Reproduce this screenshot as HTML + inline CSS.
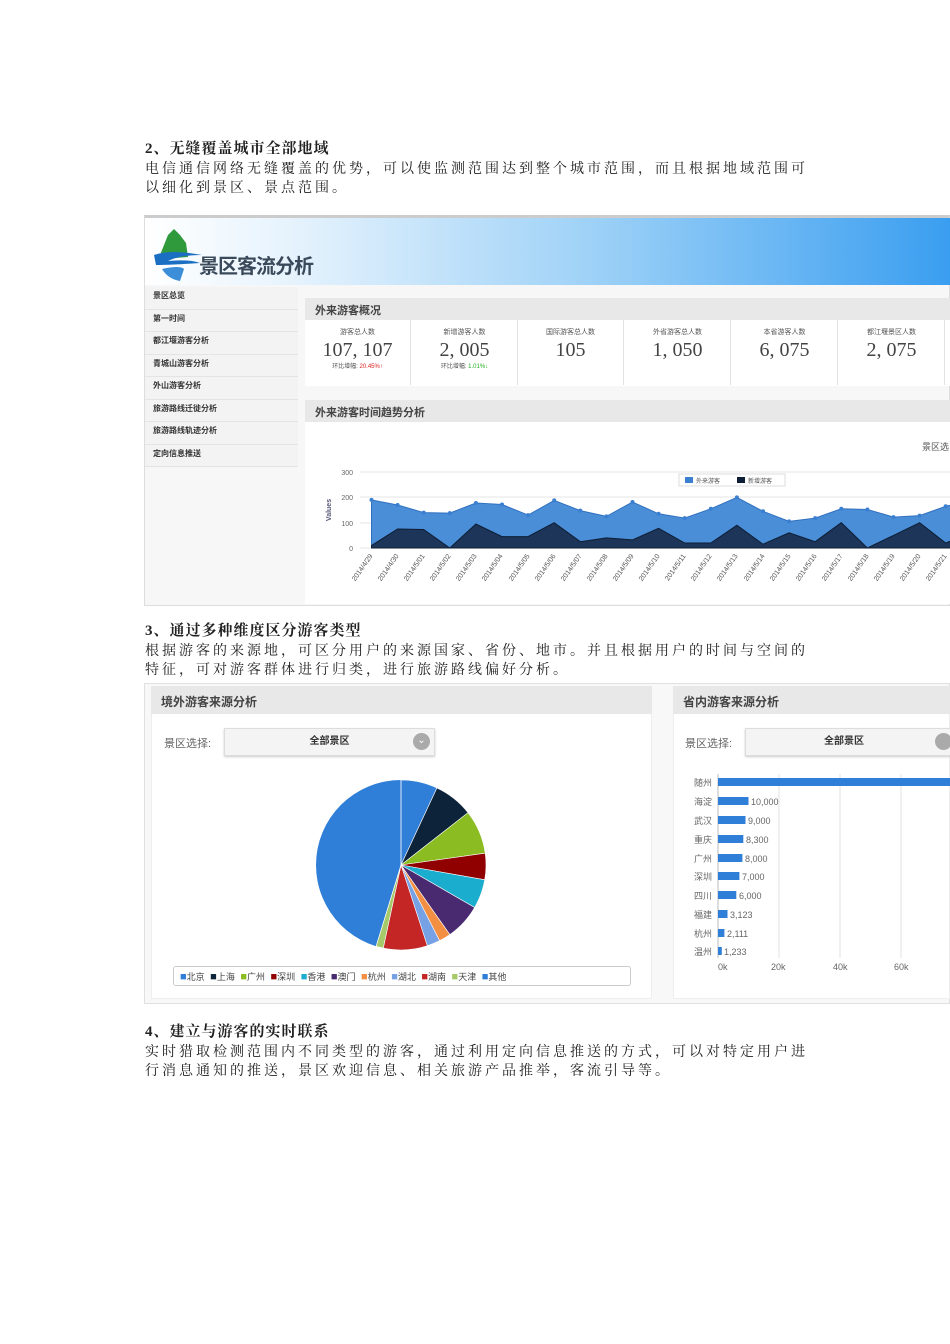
<!DOCTYPE html>
<html><head><meta charset="utf-8">
<style>
*{margin:0;padding:0;box-sizing:border-box}
body{width:950px;height:1344px;background:#fff;position:relative;overflow:hidden;font-family:"Liberation Serif","Noto Serif CJK SC",serif;color:#222}
.h{position:absolute;left:145px;font-size:15px;font-weight:bold;letter-spacing:1px;line-height:18px}
.p{position:absolute;left:145px;font-size:14px;letter-spacing:3.0px;line-height:19px;white-space:nowrap}
.abs{position:absolute}
.s{font-family:"Liberation Sans","Noto Sans CJK SC",sans-serif}
.side div{height:22.5px;border-bottom:1px solid #e4e4e4;font-size:8px;font-weight:bold;padding:3px 0 0 8px;color:#333}
.cell{position:absolute;top:320px;width:106px;height:65px;border-right:1px solid #e2e2e2;text-align:center}
.cell .t{font-size:7px;color:#555;margin-top:7px;font-family:"Liberation Sans","Noto Sans CJK SC",sans-serif}
.cell .n{font-size:20px;color:#444;line-height:22px;margin-top:2px}
.cell .c{font-size:6px;color:#555;font-family:"Liberation Sans","Noto Sans CJK SC",sans-serif}
.ph{position:absolute;background:#e8e8e8;font-size:11px;color:#444;padding:4px 0 0 10px;font-family:"Liberation Sans","Noto Sans CJK SC",sans-serif;font-weight:bold}
</style></head><body>

<div class="h" style="top:140px">2、无缝覆盖城市全部地域</div>
<div class="p" style="top:160px">电信通信网络无缝覆盖的优势，可以使监测范围达到整个城市范围，而且根据地域范围可<br>以细化到景区、景点范围。</div>

<div class="abs" style="left:144px;top:215px;width:806px;height:391px;border:1px solid #ddd;border-top:3px solid #ccc;background:#f7f7f7"></div>
<div class="abs" style="left:145px;top:218px;width:805px;height:67px;background:linear-gradient(90deg,#fff 0%,#e6f3fd 18%,#9fd2f7 55%,#3a9ef0 100%)"></div>
<svg class="abs" style="left:150px;top:225px" width="70" height="58" viewBox="0 0 70 58">
<path d="M10 30 L18 10 L24 4 L30 10 L36 18 L38 32 L12 34Z" fill="#2e9a3c"/>
<path d="M4 30 Q20 24 52 30 Q30 30 18 36 Q40 34 50 38 Q20 40 6 40Z" fill="#1b6fc2"/>
<path d="M12 44 Q30 40 34 44 L30 56 Q18 54 12 44Z" fill="#3c8ed8"/>
</svg>
<div class="abs s" style="left:199px;top:250px;font-size:20px;font-weight:bold;color:#3a4a5a;letter-spacing:-1px">景区客流分析</div>

<div class="abs side s" style="left:145px;top:287px;width:153px;background:#f3f3f3">
<div>景区总览</div><div>第一时间</div><div>都江堰游客分析</div><div>青城山游客分析</div><div>外山游客分析</div><div>旅游路线迁徙分析</div><div>旅游路线轨迹分析</div><div>定向信息推送</div>
</div>

<div class="ph" style="left:305px;top:298px;width:645px;height:22px">外来游客概况</div>
<div class="abs" style="left:305px;top:320px;width:645px;height:66px;background:#fff"></div>
<div class="cell" style="left:305px"><div class="t">游客总人数</div><div class="n">107, 107</div><div class="c">环比增幅: <span style="color:#d22">20.45%↑</span></div></div>
<div class="cell" style="left:412px"><div class="t">新增游客人数</div><div class="n">2, 005</div><div class="c">环比增幅: <span style="color:#2a2">1.01%↓</span></div></div>
<div class="cell" style="left:518px"><div class="t">国际游客总人数</div><div class="n">105</div></div>
<div class="cell" style="left:625px"><div class="t">外省游客总人数</div><div class="n">1, 050</div></div>
<div class="cell" style="left:732px"><div class="t">本省游客人数</div><div class="n">6, 075</div></div>
<div class="cell" style="left:839px"><div class="t">都江堰景区人数</div><div class="n">2, 075</div></div>

<div class="ph" style="left:305px;top:400px;width:645px;height:22px">外来游客时间趋势分析</div>
<div class="abs" style="left:305px;top:422px;width:645px;height:182px;background:#fff"></div>
<div class="abs s" style="left:922px;top:440px;font-size:9px;color:#555">景区选</div>
<svg class="abs" style="left:305px;top:422px" width="645" height="182" viewBox="305 422 645 182">
<g stroke="#e4e4e4" stroke-width="1">
<line x1="360" y1="472" x2="950" y2="472"/><line x1="360" y1="497" x2="950" y2="497"/><line x1="360" y1="523" x2="950" y2="523"/><line x1="360" y1="548" x2="950" y2="548"/>
</g>
<g font-size="7" fill="#666" font-family="Liberation Sans" text-anchor="end">
<text x="353" y="475">300</text><text x="353" y="500">200</text><text x="353" y="526">100</text><text x="353" y="551">0</text>
</g>
<text x="331" y="510" font-size="7" fill="#557" font-family="Liberation Sans" transform="rotate(-90 331 510)" text-anchor="middle" font-weight="bold">Values</text>
<path d="M371.5 548 L371.5 499.9 L397.6 505 L423.7 512.6 L449.8 513.1 L475.9 503 L502 504.5 L528.1 515.1 L554.2 500.4 L580.3 510.6 L606.4 516.4 L632.5 502 L658.6 513.8 L684.7 518.1 L710.8 508.8 L736.9 497.4 L763 511.3 L789.1 521.4 L815.2 518.1 L841.3 508.8 L867.4 509.5 L893.5 517.1 L919.6 515.6 L945.7 506.3 L971.8 500 L971.8 548Z" fill="#4a8ed8" stroke="#3070c0" stroke-width="1"/>
<path d="M371.5 548 L371.5 545.5 L397.6 529 L423.7 529.5 L449.8 548 L475.9 524 L502 536.6 L528.1 536.6 L554.2 522.7 L580.3 541.7 L606.4 537.9 L632.5 539.9 L658.6 528.3 L684.7 543 L710.8 543 L736.9 525.2 L763 544.2 L789.1 532.8 L815.2 541.7 L841.3 522.7 L867.4 548 L893.5 535.4 L919.6 522.7 L945.7 543 L971.8 532.8 L971.8 548Z" fill="#1c3558" stroke="#0e1e36" stroke-width="1"/>
<g fill="#3a7fd0">
<circle cx="371.5" cy="499.9" r="2"/><circle cx="397.6" cy="505" r="2"/><circle cx="423.7" cy="512.6" r="2"/><circle cx="449.8" cy="513.1" r="2"/><circle cx="475.9" cy="503" r="2"/><circle cx="502" cy="504.5" r="2"/><circle cx="528.1" cy="515.1" r="2"/><circle cx="554.2" cy="500.4" r="2"/><circle cx="580.3" cy="510.6" r="2"/><circle cx="606.4" cy="516.4" r="2"/><circle cx="632.5" cy="502" r="2"/><circle cx="658.6" cy="513.8" r="2"/><circle cx="684.7" cy="518.1" r="2"/><circle cx="710.8" cy="508.8" r="2"/><circle cx="736.9" cy="497.4" r="2"/><circle cx="763" cy="511.3" r="2"/><circle cx="789.1" cy="521.4" r="2"/><circle cx="815.2" cy="518.1" r="2"/><circle cx="841.3" cy="508.8" r="2"/><circle cx="867.4" cy="509.5" r="2"/><circle cx="893.5" cy="517.1" r="2"/><circle cx="919.6" cy="515.6" r="2"/><circle cx="945.7" cy="506.3" r="2"/>
</g>
<rect x="679" y="474" width="106" height="12" fill="#fff" stroke="#ddd"/>
<rect x="685" y="477" width="8" height="6" fill="#3a7fd0"/><text x="696" y="483" font-size="6" fill="#555" font-family="Noto Sans CJK SC">外来游客</text>
<rect x="737" y="477" width="8" height="6" fill="#0e1e36"/><text x="748" y="483" font-size="6" fill="#555" font-family="Noto Sans CJK SC">新增游客</text>
<g font-size="7" fill="#555" font-family="Liberation Sans" text-anchor="end">
<text transform="translate(373 556) rotate(-55)">2014/4/29</text><text transform="translate(399 556) rotate(-55)">2014/4/30</text><text transform="translate(425 556) rotate(-55)">2014/5/01</text><text transform="translate(451 556) rotate(-55)">2014/5/02</text><text transform="translate(477 556) rotate(-55)">2014/5/03</text><text transform="translate(503 556) rotate(-55)">2014/5/04</text><text transform="translate(530 556) rotate(-55)">2014/5/05</text><text transform="translate(556 556) rotate(-55)">2014/5/06</text><text transform="translate(582 556) rotate(-55)">2014/5/07</text><text transform="translate(608 556) rotate(-55)">2014/5/08</text><text transform="translate(634 556) rotate(-55)">2014/5/09</text><text transform="translate(660 556) rotate(-55)">2014/5/10</text><text transform="translate(686 556) rotate(-55)">2014/5/11</text><text transform="translate(712 556) rotate(-55)">2014/5/12</text><text transform="translate(738 556) rotate(-55)">2014/5/13</text><text transform="translate(765 556) rotate(-55)">2014/5/14</text><text transform="translate(791 556) rotate(-55)">2014/5/15</text><text transform="translate(817 556) rotate(-55)">2014/5/16</text><text transform="translate(843 556) rotate(-55)">2014/5/17</text><text transform="translate(869 556) rotate(-55)">2014/5/18</text><text transform="translate(895 556) rotate(-55)">2014/5/19</text><text transform="translate(921 556) rotate(-55)">2014/5/20</text><text transform="translate(947 556) rotate(-55)">2014/5/21</text>
</g>
</svg>

<div class="h" style="top:622px">3、通过多种维度区分游客类型</div>
<div class="p" style="top:642px">根据游客的来源地，可区分用户的来源国家、省份、地市。并且根据用户的时间与空间的<br>特征，可对游客群体进行归类，进行旅游路线偏好分析。</div>

<div class="abs" style="left:144px;top:683px;width:806px;height:321px;border:1px solid #e0e0e0;background:#f8f8f8"></div>
<div class="abs" style="left:151px;top:686px;width:501px;height:313px;background:#fff;border:1px solid #eee"></div>
<div class="ph" style="left:151px;top:686px;width:501px;height:28px;padding-top:7px;font-size:12px">境外游客来源分析</div>
<div class="abs" style="left:673px;top:686px;width:277px;height:313px;background:#fff;border:1px solid #eee"></div>
<div class="ph" style="left:673px;top:686px;width:277px;height:28px;padding-top:7px;font-size:12px">省内游客来源分析</div>

<div class="abs s" style="left:164px;top:735px;font-size:11px;color:#666">景区选择:</div>
<div class="abs s" style="left:224px;top:728px;width:211px;height:28px;background:#f4f4f4;border:1px solid #ddd;box-shadow:0 1px 2px #ccc;font-size:10px;font-weight:bold;text-align:center;line-height:26px;color:#333">全部景区</div>
<div class="abs s" style="left:413px;top:733px;width:17px;height:17px;border-radius:50%;background:#aaa;color:#fff;font-size:10px;text-align:center;line-height:16px">⌄</div>

<div class="abs s" style="left:685px;top:735px;font-size:11px;color:#666">景区选择:</div>
<div class="abs s" style="left:745px;top:728px;width:210px;height:28px;background:#f4f4f4;border:1px solid #ddd;box-shadow:0 1px 2px #ccc;font-size:10px;font-weight:bold;text-align:center;line-height:26px;color:#333;padding-right:12px">全部景区</div>
<div class="abs" style="left:935px;top:733px;width:17px;height:17px;border-radius:50%;background:#aaa"></div>

<svg class="abs" style="left:300px;top:770px" width="200" height="190" viewBox="300 770 200 190">
<circle cx="401" cy="865" r="85" fill="#2f7ed8"/>
<g stroke="#fff" stroke-width="0.6">
<path d="M401 865 L401 780 A85 85 0 0 1 436.9 788Z" fill="#2f7ed8"/>
<path d="M401 865 L436.9 788 A85 85 0 0 1 468 812.7Z" fill="#0d233a"/>
<path d="M401 865 L468 812.7 A85 85 0 0 1 485.2 853.2Z" fill="#8bbc21"/>
<path d="M401 865 L485.2 853.2 A85 85 0 0 1 484.7 879.8Z" fill="#910000"/>
<path d="M401 865 L484.7 879.8 A85 85 0 0 1 474.6 907.5Z" fill="#1aadce"/>
<path d="M401 865 L474.6 907.5 A85 85 0 0 1 449.8 934.6Z" fill="#492970"/>
<path d="M401 865 L449.8 934.6 A85 85 0 0 1 439.6 940.7Z" fill="#f28f43"/>
<path d="M401 865 L439.6 940.7 A85 85 0 0 1 427.3 945.8Z" fill="#77a1e5"/>
<path d="M401 865 L427.3 945.8 A85 85 0 0 1 383.3 948.1Z" fill="#c42525"/>
<path d="M401 865 L383.3 948.1 A85 85 0 0 1 376.1 946.3Z" fill="#a6c96a"/>
<line x1="401" y1="865" x2="376.1" y2="946.3"/>
<line x1="401" y1="865" x2="401" y2="780"/>
</g>
</svg>

<div class="abs s" style="left:173px;top:966px;width:458px;height:20px;border:1px solid #ccc;border-radius:3px;background:#fff;font-size:9px;color:#444;padding:3px 0 0 6px;white-space:nowrap;word-spacing:3px">
<span style="color:#2f7ed8;font-size:11px">■</span>北京 <span style="color:#0d233a;font-size:11px">■</span>上海 <span style="color:#8bbc21;font-size:11px">■</span>广州 <span style="color:#910000;font-size:11px">■</span>深圳 <span style="color:#1aadce;font-size:11px">■</span>香港 <span style="color:#492970;font-size:11px">■</span>澳门 <span style="color:#f28f43;font-size:11px">■</span>杭州 <span style="color:#77a1e5;font-size:11px">■</span>湖北 <span style="color:#c42525;font-size:11px">■</span>湖南 <span style="color:#a6c96a;font-size:11px">■</span>天津 <span style="color:#2f7ed8;font-size:11px">■</span>其他
</div>

<svg class="abs" style="left:680px;top:770px" width="270" height="205" viewBox="680 770 270 205">
<g stroke="#e2e2e2"><line x1="779" y1="774" x2="779" y2="958"/><line x1="840" y1="774" x2="840" y2="958"/><line x1="901" y1="774" x2="901" y2="958"/></g>
<line x1="718" y1="774" x2="718" y2="958" stroke="#bbb"/>
<g fill="#2f7ed8">
<rect x="718" y="778" width="240" height="8"/>
<rect x="718" y="797" width="30.5" height="8"/>
<rect x="718" y="816" width="27.5" height="8"/>
<rect x="718" y="835" width="25.3" height="8"/>
<rect x="718" y="854" width="24.4" height="8"/>
<rect x="718" y="872" width="21.4" height="8"/>
<rect x="718" y="891" width="18.3" height="8"/>
<rect x="718" y="910" width="9.5" height="8"/>
<rect x="718" y="929" width="6.4" height="8"/>
<rect x="718" y="947" width="3.8" height="8"/>
</g>
<g font-size="9" fill="#666" font-family="Noto Sans CJK SC" text-anchor="end">
<text x="712" y="786">随州</text><text x="712" y="805">海淀</text><text x="712" y="824">武汉</text><text x="712" y="843">重庆</text><text x="712" y="862">广州</text><text x="712" y="880">深圳</text><text x="712" y="899">四川</text><text x="712" y="918">福建</text><text x="712" y="937">杭州</text><text x="712" y="955">温州</text>
</g>
<g font-size="9" fill="#666" font-family="Liberation Sans">
<text x="751" y="805">10,000</text><text x="748" y="824">9,000</text><text x="746" y="843">8,300</text><text x="745" y="862">8,000</text><text x="742" y="880">7,000</text><text x="739" y="899">6,000</text><text x="730" y="918">3,123</text><text x="727" y="937">2,111</text><text x="724" y="955">1,233</text>
<text x="718" y="970">0k</text><text x="771" y="970">20k</text><text x="833" y="970">40k</text><text x="894" y="970">60k</text>
</g>
</svg>

<div class="h" style="top:1023px">4、建立与游客的实时联系</div>
<div class="p" style="top:1043px">实时猎取检测范围内不同类型的游客，通过利用定向信息推送的方式，可以对特定用户进<br>行消息通知的推送，景区欢迎信息、相关旅游产品推举，客流引导等。</div>
</body></html>
